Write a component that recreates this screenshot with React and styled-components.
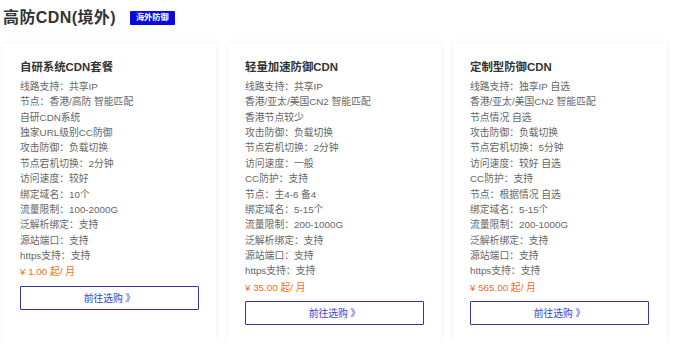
import React from 'react';
import styled, { createGlobalStyle } from 'styled-components';

const GlobalStyle = createGlobalStyle`
  body, html {
    margin: 0;
    padding: 0;
    background: #fff;
    font-family: "Liberation Sans", "Noto Sans CJK SC", sans-serif;
  }
`;

const Page = styled.div`
  padding: 6px 3px 0 3px;
  width: 693px;
  box-sizing: border-box;
`;

const Header = styled.div`
  display: flex;
  align-items: center;
  gap: 14px;
  height: 24px;
`;

const PageTitle = styled.h1`
  margin: 0;
  font-size: 16px;
  font-weight: bold;
  color: #333;
  line-height: 22px;
  letter-spacing: 0.4px;
`;

const Badge = styled.span`
  background: #0a0ae0;
  color: #fff;
  font-size: 8.2px;
  font-weight: bold;
  line-height: 14px;
  padding: 0 6px;
  border-radius: 1px;
`;

const Cards = styled.div`
  display: grid;
  grid-template-columns: repeat(3, 213px);
  gap: 12px;
  margin-top: 13px;
`;

const Card = styled.div`
  background: #fff;
  box-shadow: 0 0 6px rgba(0, 0, 0, 0.07);
  padding: 17px;
  height: 299px;
  box-sizing: border-box;
  display: flex;
  flex-direction: column;
`;

const CardTitle = styled.div`
  font-size: 11.4px;
  font-weight: bold;
  color: #333;
  line-height: 15px;
  margin-bottom: 4px;
`;

const Line = styled.div`
  font-size: 9.8px;
  color: #666;
  line-height: 15.36px;
  white-space: nowrap;
`;

const Price = styled(Line)`
  color: #f26a1b;
  margin-top: 1px;
`;

const BuyButton = styled.button`
  margin-top: 6px;
  width: 179px;
  height: 24px;
  background: #fff;
  border: 1px solid #3333a6;
  border-radius: 1px;
  color: #3344c8;
  font-family: inherit;
  font-size: 9.8px;
  cursor: pointer;
`;

const plans = [
  {
    title: '自研系统CDN套餐',
    lines: [
      '线路支持：共享IP',
      '节点：香港/高防 智能匹配',
      '自研CDN系统',
      '独家URL级别CC防御',
      '攻击防御：负载切换',
      '节点宕机切换：2分钟',
      '访问速度：较好',
      '绑定域名：10个',
      '流量限制：100-2000G',
      '泛解析绑定：支持',
      '源站端口：支持',
      'https支持：支持',
    ],
    price: '¥ 1.00 起/ 月',
  },
  {
    title: '轻量加速防御CDN',
    lines: [
      '线路支持：共享IP',
      '香港/亚太/美国CN2 智能匹配',
      '香港节点较少',
      '攻击防御：负载切换',
      '节点宕机切换：2分钟',
      '访问速度：一般',
      'CC防护：支持',
      '节点：主4-6 备4',
      '绑定域名：5-15个',
      '流量限制：200-1000G',
      '泛解析绑定：支持',
      '源站端口：支持',
      'https支持：支持',
    ],
    price: '¥ 35.00 起/ 月',
  },
  {
    title: '定制型防御CDN',
    lines: [
      '线路支持：独享IP 自选',
      '香港/亚太/美国CN2 智能匹配',
      '节点情况 自选',
      '攻击防御：负载切换',
      '节点宕机切换：5分钟',
      '访问速度：较好 自选',
      'CC防护：支持',
      '节点：根据情况 自选',
      '绑定域名：5-15个',
      '流量限制：200-1000G',
      '泛解析绑定：支持',
      '源站端口：支持',
      'https支持：支持',
    ],
    price: '¥ 565.00 起/ 月',
  },
];

const App = () => {
  return (
    <>
      <GlobalStyle />
      <Page>
        <Header>
          <PageTitle>高防CDN(境外)</PageTitle>
          <Badge>海外防御</Badge>
        </Header>
        <Cards>
          {plans.map((plan) => (
            <Card key={plan.title}>
              <CardTitle>{plan.title}</CardTitle>
              {plan.lines.map((line, i) => (
                <Line key={i}>{line}</Line>
              ))}
              <Price>{plan.price}</Price>
              <div>
                <BuyButton>前往选购 》</BuyButton>
              </div>
            </Card>
          ))}
        </Cards>
      </Page>
    </>
  );
};

export default App;
